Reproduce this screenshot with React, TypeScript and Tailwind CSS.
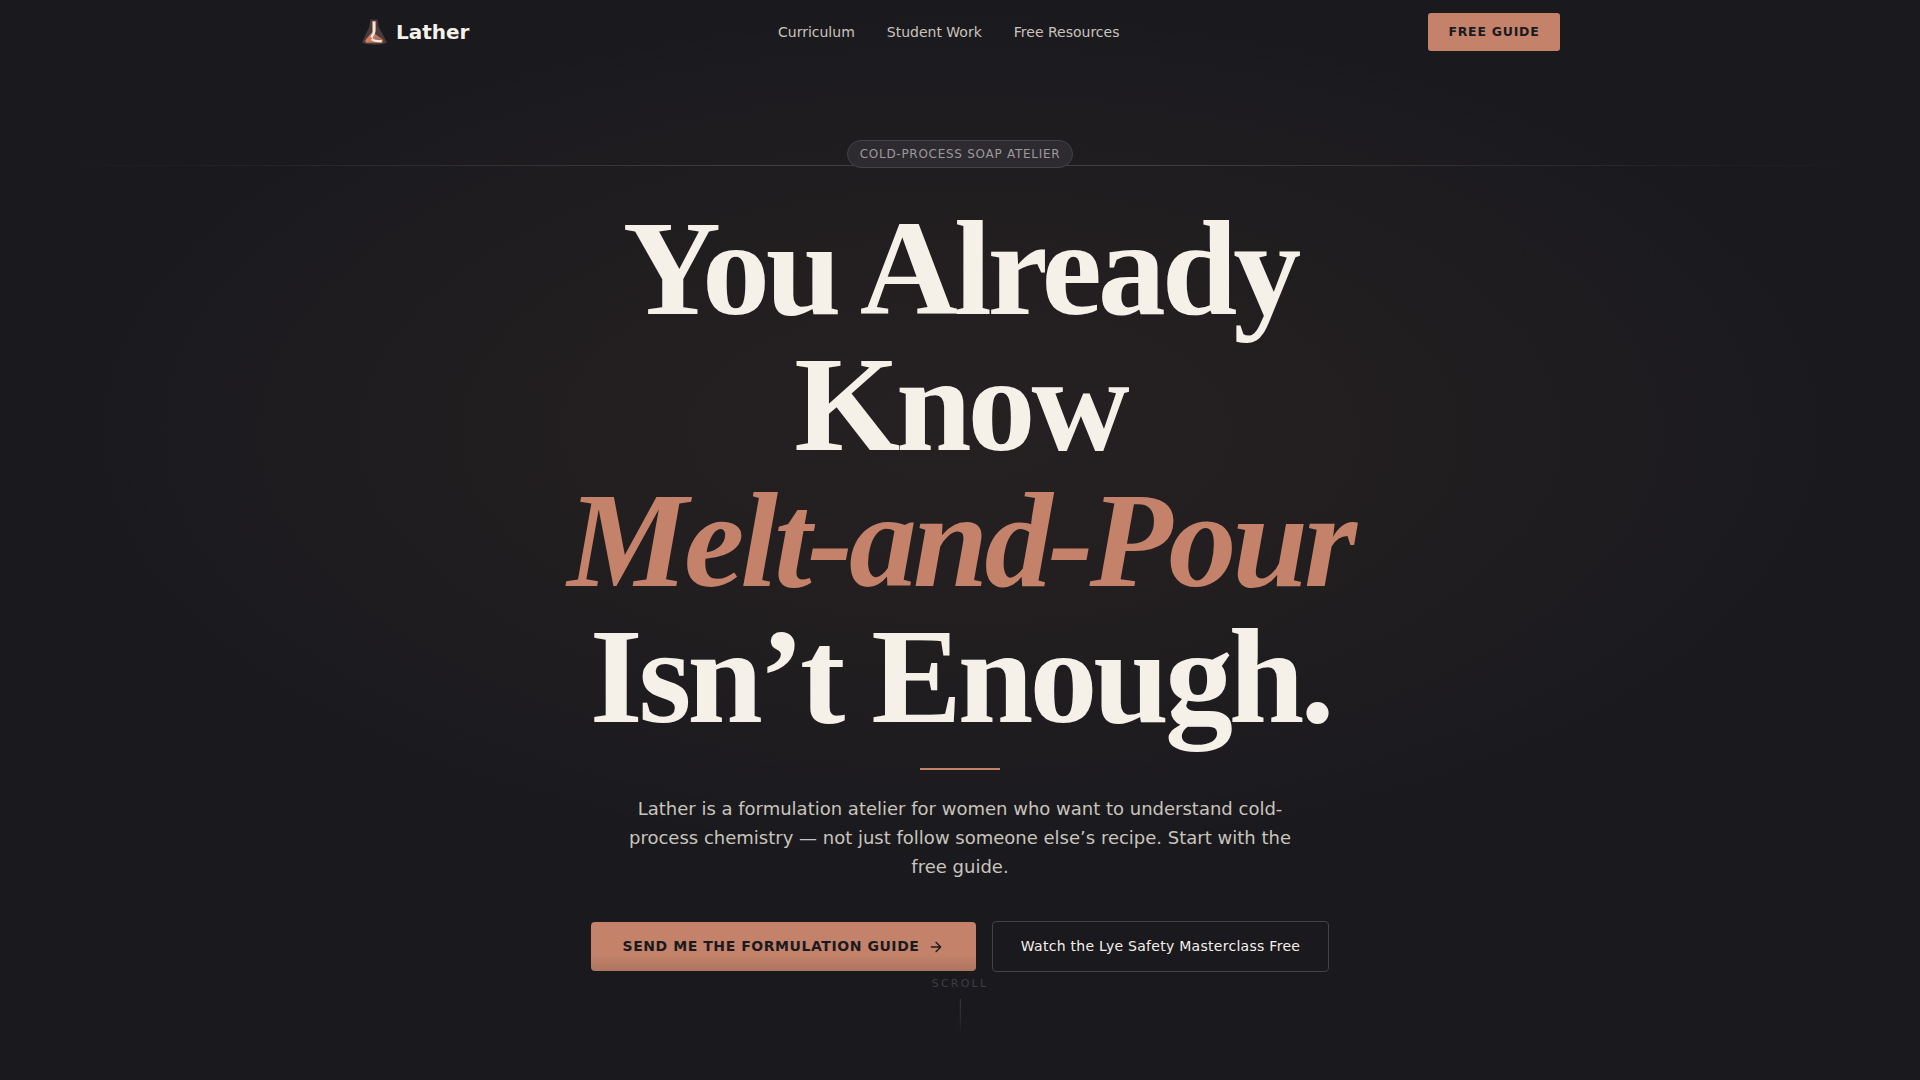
import React from "react";

const SANS = "font-['DejaVu_Sans',sans-serif]";

function Flask() {
  return (
    <svg width="29" height="32" viewBox="0 0 28 30" fill="none">
      <defs>
        <linearGradient id="f" x1="0" y1="0" x2="1" y2="1">
          <stop offset="0" stopColor="#d9a08a" />
          <stop offset="1" stopColor="#a8604a" />
        </linearGradient>
        <filter id="b" x="-20%" y="-20%" width="140%" height="140%">
          <feGaussianBlur stdDeviation="0.6" />
        </filter>
      </defs>
      <g filter="url(#b)">
        <path d="M10 3h7l1 7 8 15c-2 3-22 3-24 0l7-15z" fill="#4a3a38" />
        <path d="M12 4.500h3.200l.4 8-1.200 4.500 7.500 5c1 .8 1 3-1 3.500H7c-2 0-2.500-2-1.200-3.500L12 15z" fill="url(#f)" />
        <path d="M13.500 5v10c0 3-3 4-2.500 6 .5 2 5 3 10 3" stroke="#f2e6e0" strokeWidth="2.400" />
        <path d="M6.500 24c2-.5 3.500-2.500 4.500-3.500" stroke="#e8764c" strokeWidth="2.400" />
      </g>
    </svg>
  );
}

export default function App() {
  return (
    <div className={`relative h-[1080px] overflow-hidden bg-[#19191e] ${SANS}`}>
      <div className="absolute inset-0 bg-[radial-gradient(ellipse_70%_60%_at_50%_40%,#252021_0%,#231f20_25%,#19191e_70%)]" />
      <div className="absolute left-0 right-0 top-[165px] h-px bg-[linear-gradient(to_right,transparent_3%,#423d3e_40%,#423d3e_60%,transparent_97%)]" />
      <nav className="relative mx-auto flex h-[64px] w-[1200px] items-center justify-between">
        <div className="flex items-center gap-[7px]">
          <Flask />
          <span className="text-[20px] font-bold text-[#f5f0e8]">Lather</span>
        </div>
        <div className="flex items-center gap-[32px] text-[14px] text-[#c9c4bc]">
          <span>Curriculum</span>
          <span>Student Work</span>
          <span>Free Resources</span>
        </div>
        <button className="h-[38px] w-[132px] rounded-[3px] bg-[#c4826a] text-[12.500px] font-bold tracking-[0.75px] text-[#1a1a1f]">
          FREE GUIDE
        </button>
      </nav>
      <main className="relative flex flex-col items-center">
        <div className="mt-[76px] rounded-full border border-[#454145] bg-[#2d2b2f] px-[12px] py-[4px] text-[12px] tracking-[0.72px] text-[#9d989b]">
          COLD-PROCESS SOAP ATELIER
        </div>
        <h1 className="mt-[32px] text-center font-['Liberation_Serif',serif] text-[136px] font-bold leading-[136px] tracking-[-4.080px] text-[#f5f0e8]">
          You Already
          <br />
          Know
          <br />
          <em className="text-[#c4826a]">Melt-and-Pour</em>
          <br />
          Isn’t Enough.
        </h1>
        <div className="mt-[24px] h-[2px] w-[80px] bg-[#c4826a]" />
        <p className="mt-[24px] w-[680px] text-center text-[18px] leading-[29px] text-[#c9c4bc]">
          Lather is a formulation atelier for women who want to understand cold-process chemistry — not just follow someone else’s recipe. Start with the free guide.
        </p>
        <div className="mt-[40px] flex items-center gap-[16px]">
          <button className="flex h-[49px] w-[385px] items-center justify-center gap-[9px] rounded-[4px] bg-[linear-gradient(to_bottom,#c4826a_0%,#c4826a_65%,#ad7560_100%)] text-[14px] font-bold tracking-[0.56px] text-[#1a1a1f]">
            SEND ME THE FORMULATION GUIDE
            <svg width="16" height="16" viewBox="0 0 24 24" fill="none" stroke="currentColor" strokeWidth="2" strokeLinecap="round" strokeLinejoin="round"><path d="M5 12h14M12 5l7 7-7 7" /></svg>
          </button>
          <button className="h-[51px] w-[337px] rounded-[4px] border border-[#434246] text-[14px] tracking-[0.28px] text-[#f5f0e8]">
            Watch the Lye Safety Masterclass Free
          </button>
        </div>
      </main>
      <div className="absolute left-1/2 top-[976px] flex -translate-x-1/2 flex-col items-center gap-[6px]">
        <span className="text-[11px] tracking-[2.200px] text-[#3f3e43]">SCROLL</span>
        <div className="h-[34px] w-px bg-gradient-to-b from-[#3a393e] via-[#333237] to-transparent" />
      </div>
    </div>
  );
}
